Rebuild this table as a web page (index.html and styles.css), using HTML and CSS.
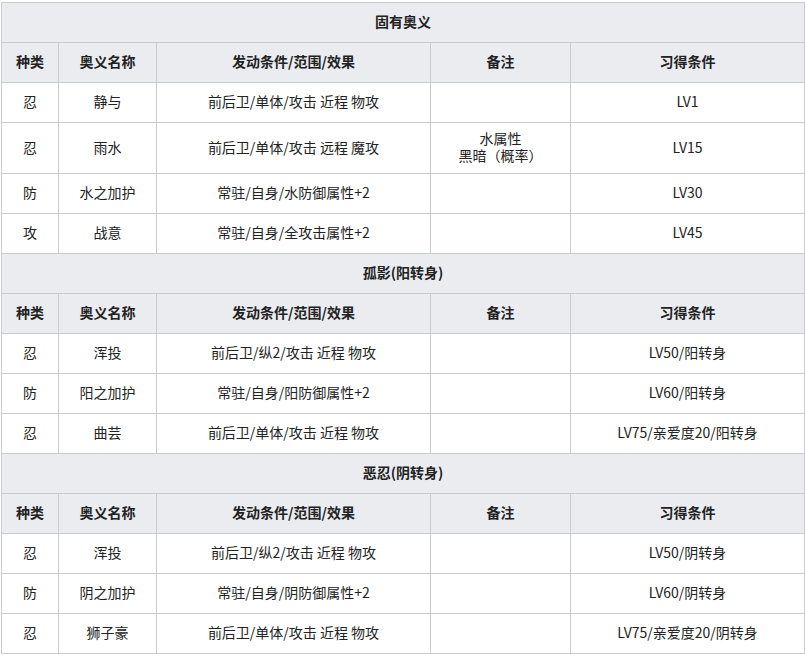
FILE: index.html
```html
<!DOCTYPE html>
<html lang="zh">
<head>
<meta charset="utf-8">
<link rel="stylesheet" href="styles.css">
</head>
<body>
<table class="wt">
<colgroup><col class="c1"><col class="c2"><col class="c3"><col class="c4"><col class="c5"></colgroup>
<tr><th colspan="5" class="sec">固有奥义</th></tr>
<tr><th>种类</th><th>奥义名称</th><th>发动条件/范围/效果</th><th>备注</th><th>习得条件</th></tr>
<tr><td>忍</td><td>静与</td><td>前后卫/单体/攻击 近程 物攻</td><td></td><td>LV1</td></tr>
<tr><td>忍</td><td>雨水</td><td>前后卫/单体/攻击 远程 魔攻</td><td><span class="ln">水属性</span><span class="ln">黑暗（概率）</span></td><td>LV15</td></tr>
<tr><td>防</td><td>水之加护</td><td>常驻/自身/水防御属性+2</td><td></td><td>LV30</td></tr>
<tr><td>攻</td><td>战意</td><td>常驻/自身/全攻击属性+2</td><td></td><td>LV45</td></tr>
<tr><th colspan="5" class="sec">孤影(阳转身)</th></tr>
<tr><th>种类</th><th>奥义名称</th><th>发动条件/范围/效果</th><th>备注</th><th>习得条件</th></tr>
<tr><td>忍</td><td>浑投</td><td>前后卫/纵2/攻击 近程 物攻</td><td></td><td>LV50/阳转身</td></tr>
<tr><td>防</td><td>阳之加护</td><td>常驻/自身/阳防御属性+2</td><td></td><td>LV60/阳转身</td></tr>
<tr><td>忍</td><td>曲芸</td><td>前后卫/单体/攻击 近程 物攻</td><td></td><td>LV75/亲爱度20/阳转身</td></tr>
<tr><th colspan="5" class="sec">恶忍(阴转身)</th></tr>
<tr><th>种类</th><th>奥义名称</th><th>发动条件/范围/效果</th><th>备注</th><th>习得条件</th></tr>
<tr><td>忍</td><td>浑投</td><td>前后卫/纵2/攻击 近程 物攻</td><td></td><td>LV50/阴转身</td></tr>
<tr><td>防</td><td>阴之加护</td><td>常驻/自身/阴防御属性+2</td><td></td><td>LV60/阴转身</td></tr>
<tr><td>忍</td><td>狮子豪</td><td>前后卫/单体/攻击 近程 物攻</td><td></td><td>LV75/亲爱度20/阴转身</td></tr>
</table>
</body>
</html>
```
FILE: styles.css
```css
html, body { margin: 0; padding: 0; background: #fff; }
body { font-family: "Noto Sans CJK SC", "Noto Sans", sans-serif; font-size: 14px; color: #222; }
.wt {
  border-collapse: collapse;
  width: 803px;
  margin: 2px 0 0 1px;
  table-layout: fixed;
}
.c1 { width: 57px; }
.c2 { width: 98px; }
.c3 { width: 274px; }
.c4 { width: 140px; }
.c5 { width: 234px; }
.wt th, .wt td {
  border: 1px solid #c8ccd1;
  padding: 7px 6px 9px;
  height: 23px;
  line-height: 17px;
  text-align: center;
  vertical-align: middle;
}
.wt th { background: #eaecf0; font-weight: bold; }
.wt td { background: #fff; }
.ln { display: block; }
```
